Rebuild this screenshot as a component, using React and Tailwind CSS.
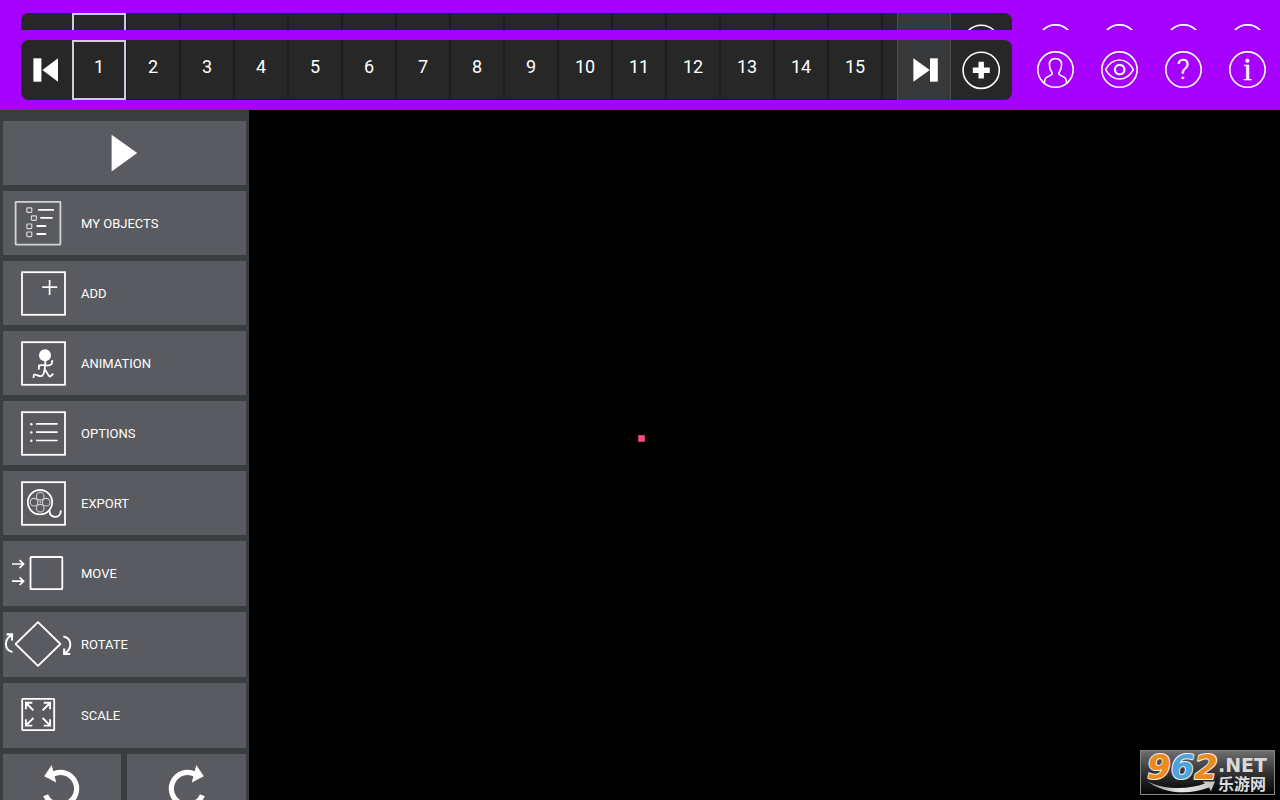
const frames = [1, 2, 3, 4, 5, 6, 7, 8, 9, 10, 11, 12, 13, 14, 15];

function IconFrame() {
  return <rect x="19" y="11.2" width="43" height="42.6" strokeWidth="1.8" />;
}

function ObjectsIcon() {
  return (
    <>
      <rect x="12.6" y="10.8" width="44.8" height="42.8" rx="0.5" stroke="#d2d3d4" strokeWidth="1.8" />
      <g strokeWidth="1.2" stroke="#d8d8d8">
        <rect x="23.8" y="16.8" width="5" height="4.6" rx="0.8" />
        <rect x="28.4" y="24.8" width="5" height="4.6" rx="0.8" />
        <rect x="23.8" y="33" width="5" height="4.6" rx="0.8" />
        <rect x="23.8" y="41" width="5" height="4.6" rx="0.8" />
      </g>
      <path d="M35 18.8H51M37.3 26.9H49.6M33.6 35H43.2M33.6 43H43.2" strokeWidth="1.8" />
    </>
  );
}

function AddIcon() {
  return (
    <>
      <IconFrame />
      <path d="M39.2 26.2H54.2M46.6 19V34" strokeWidth="1.7" />
    </>
  );
}

function AnimationIcon() {
  return (
    <>
      <IconFrame />
      <circle cx="42" cy="24.2" r="6" fill="#fff" stroke="none" />
      <path
        d="M42.4 29.5 41.6 39M42.3 34.2C45 35 49 34 49 32L49.3 29.2M42.3 33.8 36 34.4 35.8 38.6M41.6 38.6C41 42 40 45.4 37.6 45.2 35 45 33 43 30.8 43.8L30.5 46.8M41.6 38.6C44 40 45 45.6 47 45.6L50.4 42.8"
        strokeWidth="1.8"
        strokeLinejoin="round"
      />
    </>
  );
}

function OptionsIcon() {
  return (
    <>
      <IconFrame />
      <path d="M33 22.9H54.6M33 31.2H54.6M33 39.5H54.6" strokeWidth="1.7" />
      <g fill="#fff" stroke="none">
        <circle cx="28.3" cy="23.2" r="1.2" />
        <circle cx="28.3" cy="31.4" r="1.2" />
        <circle cx="28.3" cy="39.7" r="1.2" />
      </g>
    </>
  );
}

function ExportIcon() {
  return (
    <>
      <IconFrame />
      <circle cx="37" cy="31.2" r="12.2" strokeWidth="1.8" />
      <g strokeWidth="1.1" stroke="#cfcfd0">
        <circle cx="37.2" cy="25.3" r="3.8" />
        <circle cx="31" cy="31.2" r="3.8" />
        <circle cx="43.2" cy="31.2" r="3.8" />
        <circle cx="37.2" cy="37.2" r="3.8" />
      </g>
      <circle cx="37.2" cy="31.2" r="0.8" fill="#fff" stroke="none" />
      <path d="M46.4 39.4C46.6 43.6 49 45.8 52.2 45.8 56 45.8 58 43 57.8 39.4" strokeWidth="1.8" />
    </>
  );
}

function MoveIcon() {
  return (
    <>
      <rect x="27.5" y="16" width="31.8" height="32.2" rx="0.8" strokeWidth="1.8" />
      <path
        d="M9 23H20.4M16.6 19.2 20.6 23 16.6 26.8M9 40.2H20.4M16.6 36.4 20.6 40.2 16.6 44"
        strokeWidth="1.7"
      />
    </>
  );
}

function RotateIcon() {
  return (
    <>
      <path d="M35 10.2 57.4 32 35 53.8 12.6 32Z" strokeWidth="1.8" strokeLinejoin="round" />
      <path d="M9.4 40C1 38 1 27.6 8.2 23.4M60.4 24.4C68.6 25.8 70 36 62 41.4" strokeWidth="2" />
      <path d="M3.6 22.4H9V28.4M61.2 36.6V42H67.2" strokeWidth="2.2" />
    </>
  );
}

function ScaleIcon() {
  return (
    <>
      <rect x="19.2" y="15.8" width="32" height="31.4" rx="0.8" strokeWidth="1.8" />
      <path
        d="M30.4 27.4 23 20M22.9 26.2V19.8H29.3M39.6 27.4 47 20M40.7 19.8H47.1V26.2M30.4 35 23 42.4M22.9 36.2V42.6H29.3M39.6 35 47 42.4M40.7 42.6H47.1V36.2"
        strokeWidth="1.9"
      />
    </>
  );
}

const tools = [
  { label: 'MY OBJECTS', icon: ObjectsIcon },
  { label: 'ADD', icon: AddIcon },
  { label: 'ANIMATION', icon: AnimationIcon },
  { label: 'OPTIONS', icon: OptionsIcon },
  { label: 'EXPORT', icon: ExportIcon },
  { label: 'MOVE', icon: MoveIcon, tall: true },
  { label: 'ROTATE', icon: RotateIcon, tall: true },
  { label: 'SCALE', icon: ScaleIcon, tall: true },
];

function RoundButton({ label, children }) {
  return (
    <button type="button" aria-label={label} className="h-[60px] w-16 shrink-0">
      <svg viewBox="0 0 64 60" className="h-[60px] w-16" fill="none" stroke="#fff" aria-hidden="true">
        <circle cx="32.5" cy="29.6" r="17.7" strokeWidth="1.6" />
        {children}
      </svg>
    </button>
  );
}

// `edge` renders the bar without its captions, for the strip that only shows the top of it
function Toolbar({ edge = false }) {
  return (
    <div className="flex gap-[11px] pl-[21px] pr-px">
      <div className="flex h-[60px] min-w-0 flex-1 overflow-hidden rounded-lg bg-[#272727]">
        <button type="button" aria-label="First frame" className="w-[51px] shrink-0">
          <svg viewBox="0 0 51 60" className="h-[60px] w-[51px]" fill="#fff" aria-hidden="true">
            <rect x="12.4" y="18.3" width="8" height="23.4" />
            <path d="M21.4 30 37 18.3V41.7Z" />
          </svg>
        </button>
        <div className="flex min-w-0 flex-1 overflow-hidden">
          {frames.map((frame) => (
            <button
              key={frame}
              type="button"
              className={
                frame === 1
                  ? 'w-[54px] shrink-0 border-2 border-[#d3c9d8] pb-1.5 text-[18px] leading-6 text-white'
                  : 'w-[54px] shrink-0 border-x border-b border-[#1f1a26] pb-1.5 text-[18px] leading-6 text-white'
              }
            >
              {edge ? null : frame}
            </button>
          ))}
          <div className="w-[54px] shrink-0 border-x border-b border-[#1f1a26]" />
        </div>
        <button
          type="button"
          aria-label="Last frame"
          className="w-[54px] shrink-0 border-x border-[#4f5052] bg-[#37383a]"
        >
          <svg viewBox="1 0 52 60" className="h-[60px] w-[52px]" fill="#fff" aria-hidden="true">
            <path d="M16.4 18.3 32.8 30 16.4 41.7Z" />
            <rect x="33" y="18.3" width="7.8" height="23.4" />
          </svg>
        </button>
        <button type="button" aria-label="Add frame" className="w-[61px] shrink-0">
          <svg viewBox="0 0 61 60" className="h-[60px] w-[61px]" fill="none" stroke="#fff" aria-hidden="true">
            <circle cx="30.2" cy="30.3" r="18.1" strokeWidth="1.6" />
            <path d="M21.8 30.2H38.8M30.2 21.8V38.6" strokeWidth="5.4" />
          </svg>
        </button>
      </div>
      <div className="flex shrink-0">
        <RoundButton label="Account">
          <path
            d="M21.4 43.2C21.4 38.4 23.2 37 27.2 35.4 29.8 34.4 29.6 33 28.4 31.4 26.8 29.4 26.4 27.4 26.4 24.6 26.4 20.6 28.6 18.6 32.5 18.6S38.6 20.6 38.6 24.6C38.6 27.4 38.2 29.4 36.6 31.4 35.4 33 35.2 34.4 37.8 35.4 41.8 37 43.6 38.4 43.6 43.2"
            strokeWidth="1.6"
          />
        </RoundButton>
        <RoundButton label="Preview">
          <path
            d="M18.6 29.6C22 23.4 26.8 20 32.5 20S43 23.4 46.4 29.6C43 35.8 38.2 39 32.5 39S22 35.8 18.6 29.6Z"
            strokeWidth="1.6"
            strokeLinejoin="round"
          />
          <circle cx="32.7" cy="29.6" r="4.8" strokeWidth="2.2" />
        </RoundButton>
        <RoundButton label="Help">
          {edge ? null : (
            <text x="32.2" y="39" textAnchor="middle" fill="#fff" strokeWidth="0.4" className="font-['Roboto',sans-serif] text-[28px] font-light">
              ?
            </text>
          )}
        </RoundButton>
        <RoundButton label="Info">
          {edge ? null : (
            <text x="32.5" y="40" textAnchor="middle" fill="#fff" strokeWidth="0.4" className="font-['Liberation_Serif',serif] text-[31px]">
              i
            </text>
          )}
        </RoundButton>
      </div>
    </div>
  );
}

function TurnIcon({ className }) {
  return (
    <svg viewBox="0 0 118 65" className={className} fill="none" aria-hidden="true">
      <path d="M50 20.3A16.2 16.2 0 1 1 42.6 41.2" stroke="#fff" strokeWidth="5.2" />
      <path d="M41.2 22.2 48.7 11 53.2 28.4Z" fill="#fff" />
    </svg>
  );
}

function Sidebar() {
  return (
    <nav className="flex w-[249px] shrink-0 flex-col gap-1.5 overflow-hidden bg-[#3b3e41] px-[3px] pt-[11px]">
      <button type="button" aria-label="Play" className="flex h-16 shrink-0 justify-center bg-[#595b60]">
        <svg viewBox="0 0 64 64" className="size-16" fill="#fff" aria-hidden="true">
          <path d="M18.6 13.8 44.2 32 18.6 50.4Z" />
        </svg>
      </button>
      {tools.map((tool) => {
        const Icon = tool.icon;
        return (
          <button
            key={tool.label}
            type="button"
            className={
              tool.tall
                ? 'flex h-[65px] shrink-0 items-center bg-[#595b60] text-[13px] leading-5 text-white'
                : 'flex h-16 shrink-0 items-center bg-[#595b60] text-[13px] leading-5 text-white'
            }
          >
            <svg viewBox="0 0 78 64" className="h-16 w-[78px] self-start" fill="none" stroke="#fff" aria-hidden="true">
              <Icon />
            </svg>
            <span className="pt-px">{tool.label}</span>
          </button>
        );
      })}
      <div className="grid shrink-0 grid-cols-[118px_1fr] gap-1.5">
        <button type="button" aria-label="Undo" className="flex h-[65px] justify-center bg-[#595b60]">
          <TurnIcon className="h-[65px] w-[118px]" />
        </button>
        <button type="button" aria-label="Redo" className="flex h-[65px] bg-[#595b60]">
          <TurnIcon className="h-[65px] w-[118px] -scale-x-100" />
        </button>
      </div>
    </nav>
  );
}

function SiteBadge() {
  return (
    <div className="absolute bottom-[5px] right-[5px] h-[45px] w-[135px] border border-[#858585] bg-linear-to-b from-[#6e6e6e] to-[#050505]">
      <svg viewBox="1 1 133 43" className="h-full w-full overflow-visible">
        <defs>
          <linearGradient id="swoosh" x1="0" x2="1">
            <stop offset="0" stopColor="#8a8a8a" />
            <stop offset="0.5" stopColor="#e8e8e8" />
            <stop offset="1" stopColor="#c4c4c4" />
          </linearGradient>
        </defs>
        <path d="M7 31C24 40 48 40 65 33.6L62.6 31.4 75 31.6 71 41 69 37.6C48 46 22 43 7 31Z" fill="url(#swoosh)" />
        <text
          x="7"
          y="28.6"
          stroke="#f1f1f1"
          strokeWidth="2"
          strokeLinejoin="round"
          paintOrder="stroke"
          className="font-['DejaVu_Sans',sans-serif] text-[34px] font-bold italic"
        >
          <tspan fill="#ee8a1d">9</tspan>
          <tspan fill="#4fa3dc">6</tspan>
          <tspan fill="#ee8a1d">2</tspan>
        </text>
        <text x="78" y="22" fill="#d9d9d9" className="font-['DejaVu_Sans',sans-serif] text-[19px] font-bold">
          .NET
        </text>
        <text x="78" y="40" fill="#dcdcdc" className="font-['Noto_Sans_CJK_SC',sans-serif] text-[16px] font-bold">
          乐游网
        </text>
      </svg>
    </div>
  );
}

export default function App() {
  return (
    <div className="flex h-screen flex-col overflow-hidden bg-black font-['Roboto',sans-serif]">
      <header className="shrink-0 bg-[#a600ff] pb-2.5">
        <div className="h-[30px] overflow-hidden pt-[13px]" aria-hidden="true" inert>
          <Toolbar edge />
        </div>
        <div className="pt-2.5">
          <Toolbar />
        </div>
      </header>
      <div className="flex min-h-0 flex-1">
        <Sidebar />
        <main className="relative min-w-0 flex-1 bg-black">
          <div className="absolute left-[389px] top-[325px] size-[7px] border border-[#c43a68] bg-[#ff4688]" />
          <SiteBadge />
        </main>
      </div>
    </div>
  );
}
